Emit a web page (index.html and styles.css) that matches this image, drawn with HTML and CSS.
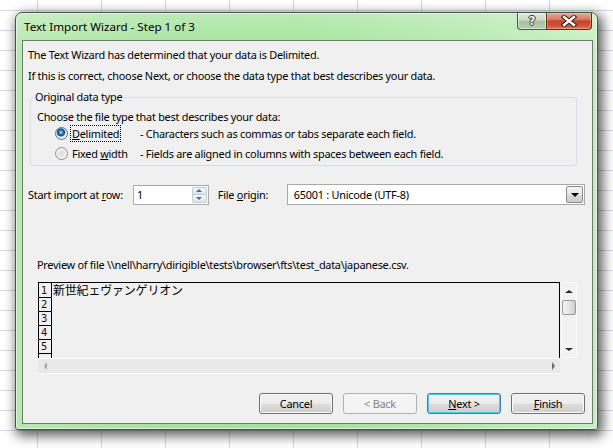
FILE: index.html
```html
<!DOCTYPE html>
<html>
<head>
<meta charset="utf-8">
<title>Text Import Wizard</title>
<link rel="stylesheet" href="styles.css">
</head>
<body>
<div class="dialog">
  <div class="titlebar">
    <span class="title">Text Import Wizard - Step 1 of 3</span>
    <div class="caption-btns">
      <div class="cbtn help"><span class="qmark">?</span></div>
      <div class="cbtn close">
        <svg width="16" height="12" viewBox="0 0 16 12">
          <path d="M3 2 L13 10 M13 2 L3 10" stroke="#3b1a14" stroke-width="4.4" stroke-linecap="square" fill="none"/>
          <path d="M3 2 L13 10 M13 2 L3 10" stroke="#ffffff" stroke-width="2.4" stroke-linecap="square" fill="none"/>
        </svg>
      </div>
    </div>
  </div>
  <div class="client">
    <p class="line l1">The Text Wizard has determined that your data is Delimited.</p>
    <p class="line l2">If this is correct, choose Next, or choose the data type that best describes your data.</p>
    <fieldset class="group">
      <legend>Original data type</legend>
      <p class="line choose">Choose the file type that best describes your data:</p>
      <div class="opt">
        <span class="radio on"></span>
        <span class="olabel"><span class="focus"><u>D</u>elimited</span></span>
        <span class="odesc">- Characters such as commas or tabs separate each field.</span>
      </div>
      <div class="opt opt2">
        <span class="radio"></span>
        <span class="olabel"><span class="nofocus">Fixed <u>w</u>idth</span></span>
        <span class="odesc">- Fields are aligned in columns with spaces between each field.</span>
      </div>
    </fieldset>
    <div class="importrow">
      <span class="lbl-start">Start import at <u>r</u>ow:</span>
      <div class="spin">
        <span class="spinval">1</span>
        <div class="spinbtns">
          <div class="sb up"><span class="tri-up"></span></div>
          <div class="sb down"><span class="tri-down"></span></div>
        </div>
      </div>
      <span class="lbl-origin">File <u>o</u>rigin:</span>
      <div class="combo">
        <span class="comboval">65001 : Unicode (UTF-8)</span>
        <div class="dd"><span class="dd-tri"></span></div>
      </div>
    </div>
    <p class="line previewlabel">Preview of file \\nell\harry\dirigible\tests\browser\fts\test_data\japanese.csv.</p>
    <div class="preview">
      <div class="pmain">
        <div class="prow first"><span class="num">1</span><span class="ptext">新世紀ェヴァンゲリオン</span></div>
        <div class="prow"><span class="num">2</span><span class="ptext"></span></div>
        <div class="prow"><span class="num">3</span><span class="ptext"></span></div>
        <div class="prow"><span class="num">4</span><span class="ptext"></span></div>
        <div class="prow"><span class="num">5</span><span class="ptext"></span></div>
        <div class="prow"><span class="num"></span><span class="ptext"></span></div>
      </div>
      <div class="vscroll">
        <span class="sarrow-up"></span>
        <div class="thumb"></div>
        <span class="sarrow-down"></span>
      </div>
      <div class="hscroll">
        <span class="sarrow-left"></span>
        <span class="sarrow-right"></span>
      </div>
      <div class="corner"></div>
    </div>
    <div class="buttons">
      <div class="btn">Cancel</div>
      <div class="btn disabled">&lt; Back</div>
      <div class="btn default"><span><u>N</u>ext &gt;</span></div>
      <div class="btn"><span><u>F</u>inish</span></div>
    </div>
  </div>
</div>
</body>
</html>
```
FILE: styles.css
```css
html, body {
  margin: 0;
  padding: 0;
}
body {
  width: 613px;
  height: 448px;
  overflow: hidden;
  background-color: #ffffff;
  background-image:
    linear-gradient(to right, #d3d9e6 1px, transparent 1px),
    linear-gradient(to bottom, #d3d9e6 1px, transparent 1px);
  background-size: 64px 20px;
  background-position: 37px 10px;
  font-family: "Noto Sans", "Open Sans", sans-serif;
  font-size: 10.9px;
  letter-spacing: -0.25px;
  color: #000;
}
.dialog {
  margin: 12px 0 0 15px;
  width: 583px;
  height: 418px;
  box-sizing: border-box;
  border: 1px solid #44544a;
  border-radius: 7px 7px 3px 3px;
  padding: 0 4px 5px 6px;
  background:
    linear-gradient(to bottom, rgba(255,255,255,0.25), rgba(255,255,255,0) 40px),
    linear-gradient(to right, #b8e8b1 0%, #a6e39d 25%, #a3e49a 50%, #b2e8ab 75%, #c6efc0 100%);
  box-shadow: 3px 4px 12px 2px rgba(0,0,0,0.62), inset 0 0 0 1px rgba(255,255,255,0.55);
  display: flex;
  flex-direction: column;
}
.titlebar {
  height: 27px;
  display: flex;
  align-items: flex-start;
  justify-content: space-between;
}
.title {
  padding-left: 2px;
  line-height: 27px;
  font-size: 11.6px;
  letter-spacing: 0;
  color: #000;
}
.caption-btns {
  display: flex;
  margin-right: 1px;
}
.cbtn {
  height: 17px;
  box-sizing: border-box;
  border: 1px solid #4b5a4a;
  border-top: none;
  display: flex;
  align-items: center;
  justify-content: center;
}
.help {
  width: 29px;
  border-radius: 0 0 0 4px;
  border-right: none;
  background: linear-gradient(to bottom, #dcebd9 0%, #c8dcc5 45%, #a6c1a2 50%, #b5cfb1 100%);
  box-shadow: inset 0 0 0 1px rgba(255,255,255,0.45);
}
.qmark {
  font-family: "DejaVu Sans", sans-serif;
  font-weight: bold;
  font-size: 12px;
  line-height: 12px;
  letter-spacing: 0;
  color: #f4f4f4;
  text-shadow: 1px 0 0 #3a3a3a, -1px 0 0 #3a3a3a, 0 1px 0 #3a3a3a, 0 -1px 0 #3a3a3a;
}
.close {
  width: 46px;
  border-color: #5b2b22;
  border-radius: 0 0 4px 0;
  background: linear-gradient(to bottom, #e8ab9c 0%, #d77a64 40%, #c2442b 50%, #cf5437 80%, #e07a58 100%);
  box-shadow: inset 0 0 0 1px rgba(255,220,200,0.35);
}
.client {
  flex: 1;
  border: 1px solid #6b7f69;
  background: #f0f0f0;
  padding: 6px 7px 0 5px;
  display: flex;
  flex-direction: column;
}
.line {
  margin: 0;
  line-height: 16px;
  white-space: nowrap;
}
.l2 {
  margin-top: 5px;
}
.group {
  margin: 5px 8px 0 2px;
  border: 1px solid #d5dfe5;
  border-radius: 3px;
  padding: 0 6px 4px 6px;
  min-width: 0;
}
.group legend {
  padding: 0 2px;
  margin-left: -4px;
  line-height: 16px;
}
.choose {
  margin-top: 4px;
}
.opt {
  display: flex;
  align-items: center;
  height: 16px;
  white-space: nowrap;
}
.opt2 {
  margin-top: 4px;
}
.radio {
  width: 13px;
  height: 13px;
  box-sizing: border-box;
  margin-left: 18px;
  margin-right: 4px;
  border-radius: 50%;
  border: 1px solid #8a8f94;
  background: radial-gradient(circle at 50% 50%, #dadada 0, #e9e9e9 3px, #f6f6f6 6px);
}
.radio.on {
  border-color: #5a7487;
  background: radial-gradient(circle at 45% 40%, #c6ecff 0, #3b94d6 1.6px, #1a5a93 3px, #12406a 3.6px, #d6dbe0 4.4px, #f3f3f3 6px);
}
.olabel {
  width: 68px;
  flex: none;
}
.focus {
  outline: 1px dotted #000;
  outline-offset: 0;
  padding: 0 1px;
  margin-left: -1px;
}
.nofocus {
  padding: 0;
}
.importrow {
  margin-top: 18px;
  height: 21px;
  display: flex;
  align-items: center;
  white-space: nowrap;
}
.lbl-start {
  width: 105px;
  flex: none;
}
.spin {
  width: 76px;
  height: 20px;
  box-sizing: border-box;
  border: 1px solid #abadb3;
  border-top-color: #a4a6ad;
  background: #fff;
  display: flex;
  align-items: center;
  justify-content: space-between;
  padding: 0 1px 0 3px;
}
.spinbtns {
  display: flex;
  flex-direction: column;
  width: 15px;
  height: 16px;
}
.sb {
  flex: 1;
  box-sizing: border-box;
  border: 1px solid #c4ccd6;
  background: linear-gradient(to bottom, #f4f6f9, #dfe5ec);
  display: flex;
  align-items: center;
  justify-content: center;
}
.sb.up { border-radius: 2px 2px 0 0; }
.sb.down { border-radius: 0 0 2px 2px; border-top: none; }
.tri-up {
  width: 0; height: 0;
  border-left: 3px solid transparent;
  border-right: 3px solid transparent;
  border-bottom: 3px solid #4e6a92;
}
.tri-down {
  width: 0; height: 0;
  border-left: 3px solid transparent;
  border-right: 3px solid transparent;
  border-top: 3px solid #4e6a92;
}
.lbl-origin {
  margin-left: 9px;
  width: 69px;
  flex: none;
}
.combo {
  width: 299px;
  height: 21px;
  box-sizing: border-box;
  border: 1px solid #a9a9a9;
  background: #fff;
  display: flex;
  align-items: center;
  justify-content: space-between;
  padding: 0 1px 0 6px;
}
.dd {
  width: 17px;
  height: 17px;
  box-sizing: border-box;
  border: 1px solid #8a8a8a;
  border-radius: 2px;
  background: linear-gradient(to bottom, #f4f4f4 0%, #e8e8e8 50%, #d9d9d9 51%, #cdcdcd 100%);
  display: flex;
  align-items: center;
  justify-content: center;
}
.dd-tri {
  width: 0; height: 0;
  border-left: 4px solid transparent;
  border-right: 4px solid transparent;
  border-top: 4px solid #000;
}
.previewlabel {
  margin-top: 52px;
  margin-left: 9px;
}
.preview {
  margin-top: 9px;
  margin-left: 10px;
  display: grid;
  grid-template-columns: 522px 1px 16px;
  grid-template-rows: 76px 16px;
  width: 539px;
}
.pmain {
  grid-column: 1;
  grid-row: 1;
  border: 1px solid #000;
  border-bottom: none;
  overflow: hidden;
  background: #f0f0f0;
}
.prow {
  display: flex;
  height: 14px;
}
.prow.first {
  height: 15px;
}
.num {
  width: 13px;
  flex: none;
  box-sizing: border-box;
  border-right: 1px solid #000;
  border-bottom: 1px solid #000;
  font-family: "DejaVu Sans", sans-serif;
  font-size: 10px;
  letter-spacing: 0;
  line-height: 13px;
  padding-left: 2px;
  color: #1b0f12;
}
.prow.first .num {
  line-height: 15px;
}
.ptext {
  font-family: "Noto Sans CJK JP", sans-serif;
  font-size: 12px;
  line-height: 14px;
  padding-left: 1px;
  letter-spacing: -0.2px;
  color: #000;
  white-space: nowrap;
}
.vscroll {
  grid-column: 3;
  grid-row: 1;
  box-sizing: border-box;
  border: 1px solid #fbfbfb;
  background: #f2f2f2;
  display: flex;
  flex-direction: column;
  align-items: center;
}
.sarrow-up {
  margin-top: 7px;
  width: 0; height: 0;
  border-left: 4px solid transparent;
  border-right: 4px solid transparent;
  border-bottom: 3px solid #2a2a2a;
}
.thumb {
  margin-top: 7px;
  width: 14px;
  height: 15px;
  box-sizing: border-box;
  border: 1px solid #9a9a9a;
  border-radius: 2px;
  background: linear-gradient(to right, #f4f4f4, #e2e2e2 60%, #cdcdcd);
}
.sarrow-down {
  margin-top: 33px;
  width: 0; height: 0;
  border-left: 4px solid transparent;
  border-right: 4px solid transparent;
  border-top: 3px solid #2a2a2a;
}
.hscroll {
  grid-column: 1;
  grid-row: 2;
  box-sizing: border-box;
  border-top: 1px solid #fbfbfb;
  border-bottom: 1px solid #fbfbfb;
  background: #e9e9e9;
  display: flex;
  align-items: center;
  justify-content: space-between;
  padding: 0 5px 0 6px;
}
.sarrow-left {
  width: 0; height: 0;
  border-top: 4px solid transparent;
  border-bottom: 4px solid transparent;
  border-right: 3px solid #a8a8a8;
}
.sarrow-right {
  width: 0; height: 0;
  border-top: 4px solid transparent;
  border-bottom: 4px solid transparent;
  border-left: 3px solid #6a6a6a;
}
.corner {
  grid-column: 2 / 4;
  grid-row: 2;
  background: #f0f0f0;
}
.buttons {
  margin-top: 19px;
  display: flex;
  justify-content: flex-end;
  gap: 10px;
}
.btn {
  width: 74px;
  height: 21px;
  box-sizing: border-box;
  border: 1px solid #707070;
  border-radius: 3px;
  background: linear-gradient(to bottom, #f2f2f2 0%, #ebebeb 50%, #dddddd 51%, #cfcfcf 100%);
  box-shadow: inset 0 0 0 1px #fbfbfb;
  display: flex;
  align-items: center;
  justify-content: center;
  line-height: 16px;
}
.btn.disabled {
  border-color: #adb2b5;
  background: #f4f4f4;
  color: #838383;
  box-shadow: none;
}
.btn.default {
  border-color: #3c7fb1;
  box-shadow: inset 0 0 0 1px #52c7ef;
}
```
